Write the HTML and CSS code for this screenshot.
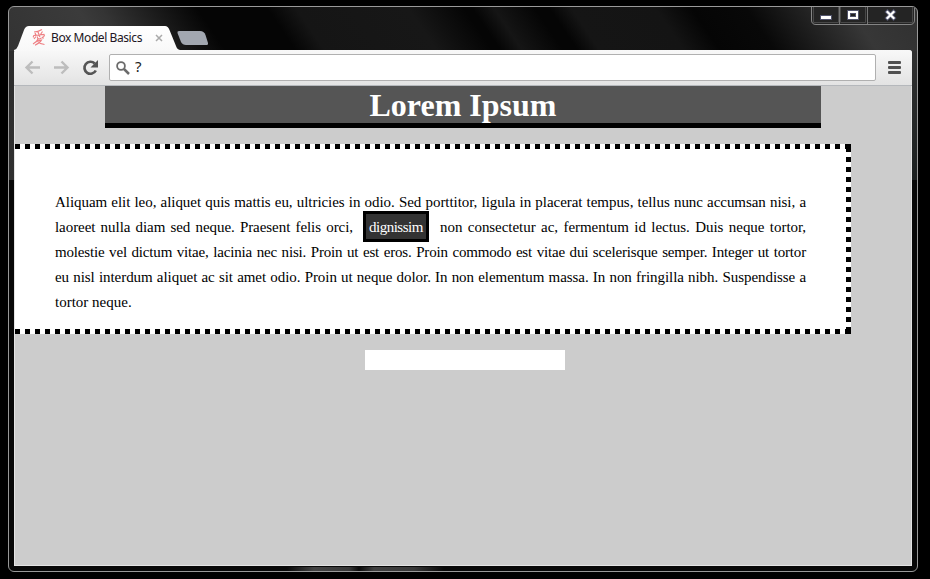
FILE: index.html
```
<!DOCTYPE html>
<html lang="en">
<head>
<meta charset="utf-8">
<title>Box Model Basics</title>
<link rel="stylesheet" href="styles.css">
</head>
<body>
<div class="window">
  <div class="controls">
    <svg width="106" height="20" viewBox="0 0 106 20">
      <path d="M1.500 0V14Q1.500 18.500 6 18.500H100Q104.500 18.500 104.500 14V0" fill="#242424" stroke="#858585"/>
      <path d="M3.500 0V16.500H28.500V0M30.500 0V16.500H55.500V0M57.500 0V16.500H102.500V0" fill="none" stroke="#484848"/>
      <path d="M29.500 0V18M57.500 0V18" stroke="#757575"/>
      <rect x="10.500" y="9.500" width="11" height="4" fill="#fff" stroke="#50526a"/>
      <path d="M37.500 4.500h11v9h-11z" fill="#fff" stroke="#50526a"/>
      <rect x="40.500" y="7.500" width="5" height="3" fill="#222" stroke="#50526a"/>
      <path d="M76 4.500l9 9M85 4.500l-9 9" stroke="#50526a" stroke-width="4.200"/>
      <path d="M76.700 5.200l7.600 7.600M84.300 5.200l-7.600 7.600" stroke="#fff" stroke-width="2.300"/>
    </svg>
  </div>
  <div class="tabs">
    <svg class="tabshape" width="200" height="25" viewBox="0 0 200 25">
      <defs><linearGradient id="t" x2="0" y2="1"><stop stop-color="#fff"/><stop offset="1" stop-color="#f8f8f8"/></linearGradient></defs>
      <path d="M0 25V24Q3 23 4 20L10 4Q11.500 0 15 0H151Q154 0 155.500 4L162 20Q163 23.500 166 24V25Z" fill="url(#t)"/>
      <path d="M163.500 7Q163 5 165 5H186Q190 5 191.500 9L194 17Q194.500 19 192 19H172Q168.500 19 167 16Z" fill="#a2a7b0"/>
    </svg>
    <div class="tab">
      <svg class="favicon" width="14" height="17" viewBox="0 0 14 17" fill="none" stroke="#ee8084" stroke-width="1.200">
        <path d="M10 .5Q6 3 2 3M3 4l1 2M6 3l1 2.500M10.500 2.500L8.500 5.500M1.500 8.500Q1 6 3 6.500L12 5.500Q13 7 11 8M4 7.500L2 10M5.500 7.500Q5 10 7.500 10L9.500 9M7 6.500l1 1.500M10 8l1.500 1.500M6 10Q5 13 1 15M4.500 12L9.500 11Q8 14 3 16.200M5 12Q8 15 12.500 15.500"/>
      </svg>
      <span class="tabtitle">Box Model Basics</span>
      <svg class="close" width="8" height="8" viewBox="0 0 8 8"><path d="M1 1l6 6M7 1L1 7" stroke="#aaa" stroke-width="1.500"/></svg>
    </div>
  </div>
  <div class="client">
    <div class="toolbar">
      <svg class="nav" width="80" height="20" viewBox="0 0 80 20" fill="none">
        <g stroke="#bdbdbd" stroke-width="2.400"><path d="M4 9.500h14M10.500 3.500L4.500 9.500L10.500 15.500M32 9.500h14M39.500 3.500L45.500 9.500L39.500 15.500"/></g>
        <path d="M73.800 12.500A6 6 0 1 1 72.700 5.500" stroke="#555" stroke-width="2.700"/><path d="M76 2V9.500H68.500Z" fill="#555"/>
      </svg>
      <div class="omnibox">
        <svg width="14" height="14" viewBox="0 0 14 14" fill="none" stroke="#6b6b6b"><circle cx="5" cy="5" r="3.900" stroke-width="1.800"/><path d="M8 8l5 5" stroke-width="2.500"/></svg>
        <span>?</span>
      </div>
      <div class="menu"><i></i><i></i><i></i></div>
    </div>
    <main class="page">
      <h1>Lorem Ipsum</h1>
      <section class="box">
        <p>
          <span class="line">Aliquam elit leo, aliquet quis mattis eu, ultricies in odio. Sed porttitor, ligula in placerat tempus, tellus nunc accumsan nisi, a</span>
          <span class="line split"><span class="before">laoreet nulla diam sed neque. Praesent felis orci,</span><em>dignissim</em><span class="after">non consectetur ac, fermentum id lectus. Duis neque tortor,</span></span>
          <span class="line tight">molestie vel dictum vitae, lacinia nec nisi. Proin ut est eros. Proin commodo est vitae dui scelerisque semper. Integer ut tortor</span>
          <span class="line">eu nisl interdum aliquet ac sit amet odio. Proin ut neque dolor. In non elementum massa. In non fringilla nibh. Suspendisse a</span>
          <span class="line last">tortor neque.</span>
        </p>
      </section>
      <div class="small"></div>
    </main>
  </div>
</div>
</body>
</html>
```

FILE: styles.css
```
* { box-sizing: border-box; }
body { margin: 0; height: 579px; overflow: hidden; background: #000; padding: 6px 12px 7px 8px; }
.window {
  position: relative; width: 910px; height: 566px; border: 1px solid #999; border-radius: 6px;
  padding: 18px 5px 5px; overflow: hidden;
  background:
    linear-gradient(90deg, transparent 278px, #444 305px, #383838 340px, #0a0a0a 350px, #404040 365px, #383838 405px, transparent 435px) 0 560px / 100% 4px no-repeat,
    linear-gradient(#2c2c2c, #303030) 0 44px / 6px 129px no-repeat,
    linear-gradient(#303030, #1c2020) 902px 44px / 6px 129px no-repeat,
    linear-gradient(56deg, #333 0, #3b3b3b 80px, #343434 100px, #050505 180px, #050505 238px, #151515 262px, #171717 355px, #050505 401px, #050505 408px, #151515 426px, #050505 460px, #050505 472px, #151515 490px, #141414 560px, #050505 590px, #080808 635px, #373737 720px, #303030 100%) 0 0 / 100% 44px no-repeat,
    #080808;
}
.controls { position: absolute; right: 1px; top: -1px; height: 20px; }
.controls svg, .tabshape { display: block; }
.tabs { position: relative; height: 25px; }
.tabshape { position: absolute; left: 0; top: 1px; }
.tab { position: relative; height: 25px; display: flex; align-items: center; padding-left: 18px; }
.favicon { margin-right: 5px; width: 14px; }
.tabtitle { font: 12px/16px "Noto Sans", sans-serif; width: 103px; white-space: nowrap; color: #211522; letter-spacing: -.42px; }
.close { margin: 1px 0 0 1px; }
.client { height: 516px; width: 898px; border-radius: 3px 3px 0 0; overflow: hidden; background: #ccc; }
.toolbar { height: 36px; display: flex; align-items: center; background: linear-gradient(#f8f8f8, #e3e3e3); border-bottom: 1px solid #b5b8bc; padding-left: 8px; }
.nav { width: 80px; margin-right: 7px; }
.omnibox { width: 767px; height: 27px; border: 1px solid #b0b0b0; border-radius: 2px; background: #fff; display: flex; align-items: center; padding-left: 6px; gap: 5px; font: 15px/23px "Noto Sans", sans-serif; color: #222; }
.omnibox span { margin-top: -2px; }
.menu { margin-left: 12px; width: 13px; display: grid; gap: 2px; }
.menu i { height: 3px; background: #505050; border-radius: 1px; }
.page { height: 480px; border: solid #e4e4e4; border-width: 0 1px 1px; background: #ccc; font-family: "Liberation Serif", "Times New Roman", serif; }
h1 { width: 716px; height: 42px; margin: 0 0 16px 90px; border-bottom: 5px solid #000; background: #555; color: #fff; font-size: 32px; line-height: 38px; text-align: center; }
.box {
  width: 836px; height: 190px; padding: 46px 45px 0 40px;
  background:
    linear-gradient(#000, #000) 100% 0 / 6px 5px no-repeat,
    linear-gradient(#000, #000) 100% 100% / 6px 5px no-repeat,
    linear-gradient(#000, #000) 100% 0 / 5px 8px no-repeat,
    linear-gradient(#000, #000) 100% 100% / 5px 7px no-repeat,
    repeating-linear-gradient(90deg, #000 0 5px, #fff 5px 10px) 0 0 / 830px 5px no-repeat,
    repeating-linear-gradient(90deg, #000 0 5px, #fff 5px 10px) 0 100% / 830px 5px no-repeat,
    repeating-linear-gradient(#fff 0 5px, #000 5px 10px) 100% 8px / 5px 170px no-repeat,
    #fff;
}
p { margin: 0; color: #000; font-size: 15px; line-height: 25px; }
.line { display: block; height: 25px; text-align: justify; text-align-last: justify; width: 751px; letter-spacing: -.05px; }
.tight { letter-spacing: -.17px; }
.split { display: flex; align-items: center; }
.before { width: 298px; }
.after { width: 366px; margin-left: 11px; }
em { font-style: normal; width: 66px; height: 31px; margin: -2px 0 0 10px; flex: none; border: 3px solid #000; background: #333; color: #fff; letter-spacing: -.5px; line-height: 27px; padding-left: 3px; }
.last { text-align-last: left; letter-spacing: 0; }
.small { width: 200px; height: 20px; margin: 16px 0 0 350px; background: #fff; }
```
